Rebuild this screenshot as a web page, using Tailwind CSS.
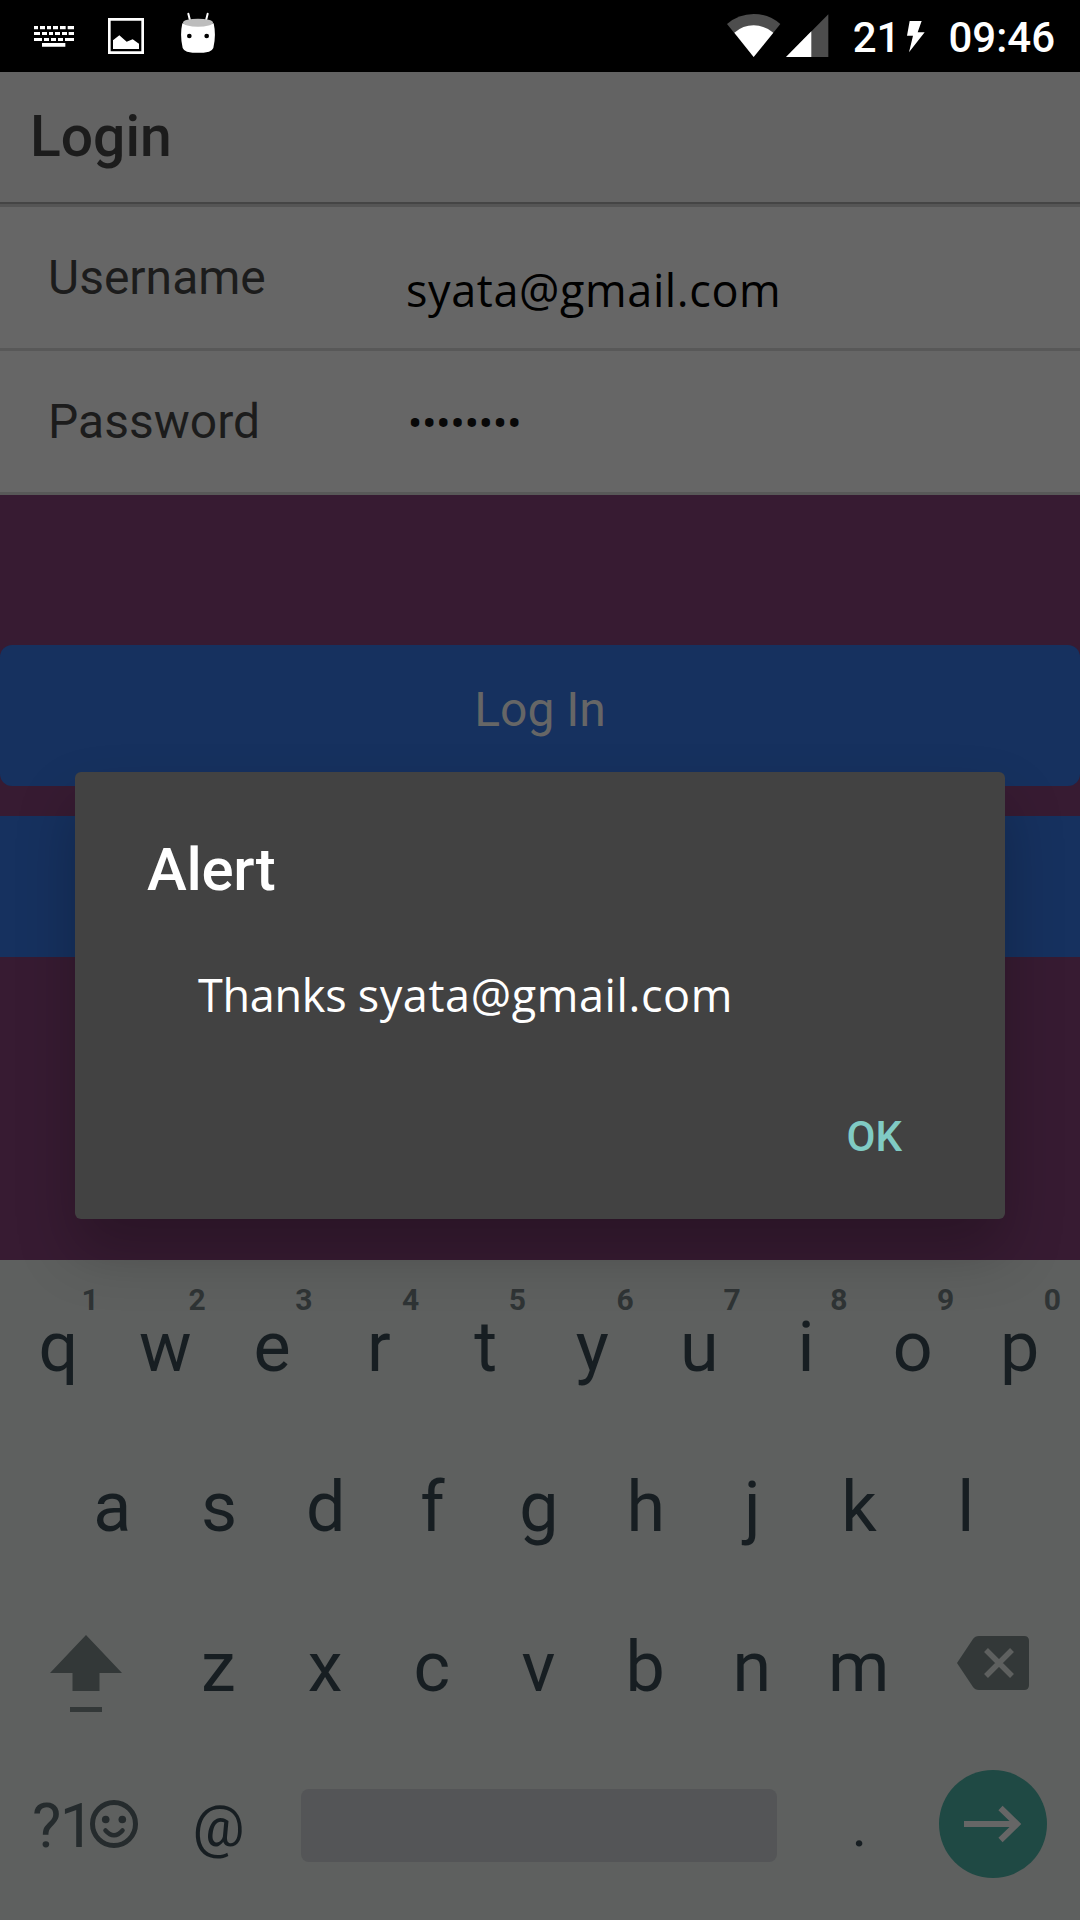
<!DOCTYPE html>
<html lang="en">
<head>
<meta charset="utf-8">
<title>Login</title>
<script src="https://cdn.jsdelivr.net/npm/@tailwindcss/browser@4"></script>
</head>
<body class="bg-black">
<div class="relative flex h-[1920px] w-[1080px] flex-col overflow-hidden font-['Roboto',sans-serif]">

  <!-- Status bar -->
  <header class="flex h-[72px] items-start bg-black text-white">
    <svg class="ml-[34px] h-[72px] w-10 shrink-0" viewBox="102 0 120 216" fill="#fff">
      <path d="M102 78h12v10h-12zM120 78h15v10h-15zM141 78h12v10h-12zM159 78h15v10h-15zM180 78h17v10h-17zM203 78h19v10h-19zM102 96h18v9h-18zM126 96h15v9h-15zM147 96h12v9h-12zM165 96h15v9h-15zM186 96h15v9h-15zM206 96h16v9h-16zM102 114h24v9h-24zM132 114h15v9h-15zM153 114h15v9h-15zM174 114h15v9h-15zM195 114h27v9h-27zM126 129h70v11h-70z"/>
    </svg>
    <svg class="ml-[34px] h-[72px] w-9 shrink-0" viewBox="324 0 108 216">
      <path fill="#fff" fill-rule="evenodd" d="M324 54h108v108H324zM332 62v92h92V62zM339 147v-26l19-15 22 19 18-7 19 13v16z"/>
    </svg>
    <svg class="ml-[36px] h-[72px] w-[36px] shrink-0" viewBox="540 0 108 216">
      <path d="M565 41l6 24M623 41l-6 24" stroke="#fff" stroke-width="6" stroke-linecap="round"/>
      <path fill="#fff" d="M547 70q47 12 94 0q8 36-1 74q-3 8-13 11q-33 7-66 0q-10-3-13-11q-9-38-1-74z"/>
      <ellipse cx="594" cy="68" rx="45" ry="12" fill="#bdbdbd"/>
      <circle cx="568" cy="108" r="7" fill="#000"/><circle cx="620" cy="108" r="7" fill="#000"/>
    </svg>
    <svg class="ml-auto h-[72px] w-[54px] shrink-0" viewBox="80 0 162 216">
      <path fill="#4d4d4d" d="M160 171L80 72Q115 42 160 42T240 72z"/>
      <path fill="#fff" d="M160 171L102 98Q128 76 160 76T219 98z"/>
    </svg>
    <svg class="ml-[4px] h-[72px] w-[44px] shrink-0" viewBox="254 0 132 216">
      <path fill="#4d4d4d" d="M257 171L384 43V171z"/><path fill="#fff" d="M257 171L333 94V171z"/>
    </svg>
    <span class="ml-[24px] mt-[13px] text-[42px] leading-[50px] font-medium">21</span>
    <svg class="ml-[6px] h-[72px] w-[20px] shrink-0" viewBox="623 0 60 216">
      <path fill="#fff" d="M634 63h36l-12 34h21l-47 60 12-50h-18z"/>
    </svg>
    <span class="ml-[22px] mr-[25px] mt-[13px] text-[42px] leading-[50px] font-medium">09:46</span>
  </header>

  <!-- Title bar -->
  <div class="flex h-[130px] items-center bg-[#636363] px-[30px] text-[57px] font-medium text-[#1c1c1c]">Login</div>
  <div class="h-[5px] border-t-2 border-[#454545] bg-[#555]"></div>

  <!-- Form -->
  <div class="flex h-36 items-center border-b-3 border-[#585858] bg-[#666] pl-12">
    <label class="w-[358px] text-[48px] text-[#1c1c1c]">Username</label>
    <span class="mt-[25px] font-['Open_Sans',sans-serif] text-[45px] tracking-[0.6px] text-black">syata@gmail.com</span>
  </div>
  <div class="flex h-36 items-center border-b-3 border-[#585858] bg-[#666] pl-12">
    <label class="w-[360px] text-[48px] text-[#1c1c1c]">Password</label>
    <span class="mt-[3px] text-[42px] text-[#080808]">••••••••</span>
  </div>

  <!-- Actions -->
  <main class="flex h-[765px] flex-col gap-[30px] bg-[#371b32] pt-[150px]">
    <div class="flex h-[141px] items-center justify-center rounded-xl bg-[#16315f] pb-3 text-[48px] text-[#666]">Log In</div>
    <div class="h-[141px] bg-[#16315f]"></div>
  </main>

  <!-- Keyboard -->
  <section class="flex h-[660px] flex-col bg-[#5e605f] px-[5px] pt-[6px] text-center text-[70px] leading-[162px] text-[#171e22]">
    <div class="grid h-40 w-[1068px] grid-cols-10">
      <div class="relative">q<sup class="absolute right-[13px] top-[19px] text-[30px] leading-[30px] font-bold text-[#2f3435]">1</sup></div>
      <div class="relative">w<sup class="absolute right-[13px] top-[19px] text-[30px] leading-[30px] font-bold text-[#2f3435]">2</sup></div>
      <div class="relative">e<sup class="absolute right-[13px] top-[19px] text-[30px] leading-[30px] font-bold text-[#2f3435]">3</sup></div>
      <div class="relative">r<sup class="absolute right-[13px] top-[19px] text-[30px] leading-[30px] font-bold text-[#2f3435]">4</sup></div>
      <div class="relative">t<sup class="absolute right-[13px] top-[19px] text-[30px] leading-[30px] font-bold text-[#2f3435]">5</sup></div>
      <div class="relative">y<sup class="absolute right-[12px] top-[19px] text-[30px] leading-[30px] font-bold text-[#2f3435]">6</sup></div>
      <div class="relative">u<sup class="absolute right-[12px] top-[19px] text-[30px] leading-[30px] font-bold text-[#2f3435]">7</sup></div>
      <div class="relative">i<sup class="absolute right-[12px] top-[19px] text-[30px] leading-[30px] font-bold text-[#2f3435]">8</sup></div>
      <div class="relative">o<sup class="absolute right-[12px] top-[19px] text-[30px] leading-[30px] font-bold text-[#2f3435]">9</sup></div>
      <div class="relative">p<sup class="absolute right-[12px] top-[19px] text-[30px] leading-[30px] font-bold text-[#2f3435]">0</sup></div>
    </div>
    <div class="ml-[54px] grid h-40 w-[960px] grid-cols-9">
      <div>a</div><div>s</div><div>d</div><div>f</div><div>g</div><div>h</div><div>j</div><div>k</div><div>l</div>
    </div>
    <div class="flex h-40">
      <svg class="h-40 w-[160px] shrink-0" viewBox="5 1586 160 160" fill="#333838">
        <path d="M86 1635l36 38H99.500v18H72.500v-18H50zM70 1707h32v5H70z"/>
      </svg>
      <div class="mr-[2px] grid w-[747px] grid-cols-7">
        <div>z</div><div>x</div><div>c</div><div>v</div><div>b</div><div>n</div><div>m</div>
      </div>
      <svg class="h-40 w-[161px] shrink-0" viewBox="914 1586 161 160">
        <path fill="#333838" d="M957 1663l16-24q2-3 6-3h45q5 0 5 5v44q0 5-5 5h-45q-4 0-6-3z"/>
        <path d="M986 1650l26 26M1012 1650l-26 26" stroke="#5e605f" stroke-width="5.500"/>
      </svg>
    </div>
    <div class="flex h-40 items-center">
      <div class="flex w-[160px] items-center pl-[27px] text-[#252b2d]">
        <span class="text-[62px] tracking-[-1.5px]">?1</span>
        <svg class="-ml-[4px] mb-[4px] h-[50px] w-[50px] shrink-0" viewBox="-25 -25 50 50" fill="none" stroke="currentColor">
          <circle r="21.500" stroke-width="5"/>
          <path d="M-8.500 6.500q8.500 9.500 17 0" stroke-width="4.500" stroke-linecap="round"/>
          <circle cx="-8.300" cy="-4.500" r="3.800" fill="currentColor" stroke="none"/><circle cx="8.300" cy="-4.500" r="3.800" fill="currentColor" stroke="none"/>
        </svg>
      </div>
      <div class="w-[107px] text-[58px]">@</div>
      <div class="mb-[2px] ml-[29px] h-[73px] w-[476px] rounded-lg bg-[#545557]"></div>
      <div class="ml-[29px] w-[107px] text-[58px]">.</div>
      <div class="mb-1 ml-[26px] flex size-[108px] items-center justify-center rounded-full bg-[#1f4944]">
        <svg class="size-[108px]" viewBox="939 1770 108 108" fill="none" stroke="#666" stroke-width="6">
          <path d="M964 1824h53M1000.500 1808l16.500 16-16.500 16"/>
        </svg>
      </div>
    </div>
  </section>

  <!-- Alert dialog -->
  <div class="absolute left-[75px] top-[772px] flex h-[447px] w-[930px] flex-col rounded-md bg-[#424242] pl-[72px] pt-[68px] text-white shadow-[0_32px_60px_rgba(0,0,0,0.24)]">
    <h2 class="text-[60px] leading-[60px] font-medium tracking-[-0.3px]">Alert</h2>
    <p class="ml-[51px] mt-[65px] font-['Open_Sans',sans-serif] text-[45px] leading-[60px] tracking-[0.6px]"><span class="tracking-[-0.3px]">Thanks </span>syata@gmail.com</p>
    <button class="mr-[103px] mt-[87px] self-end text-[42px] leading-[50px] font-medium text-[#80cbc4]">OK</button>
  </div>
</div>
</body>
</html>
